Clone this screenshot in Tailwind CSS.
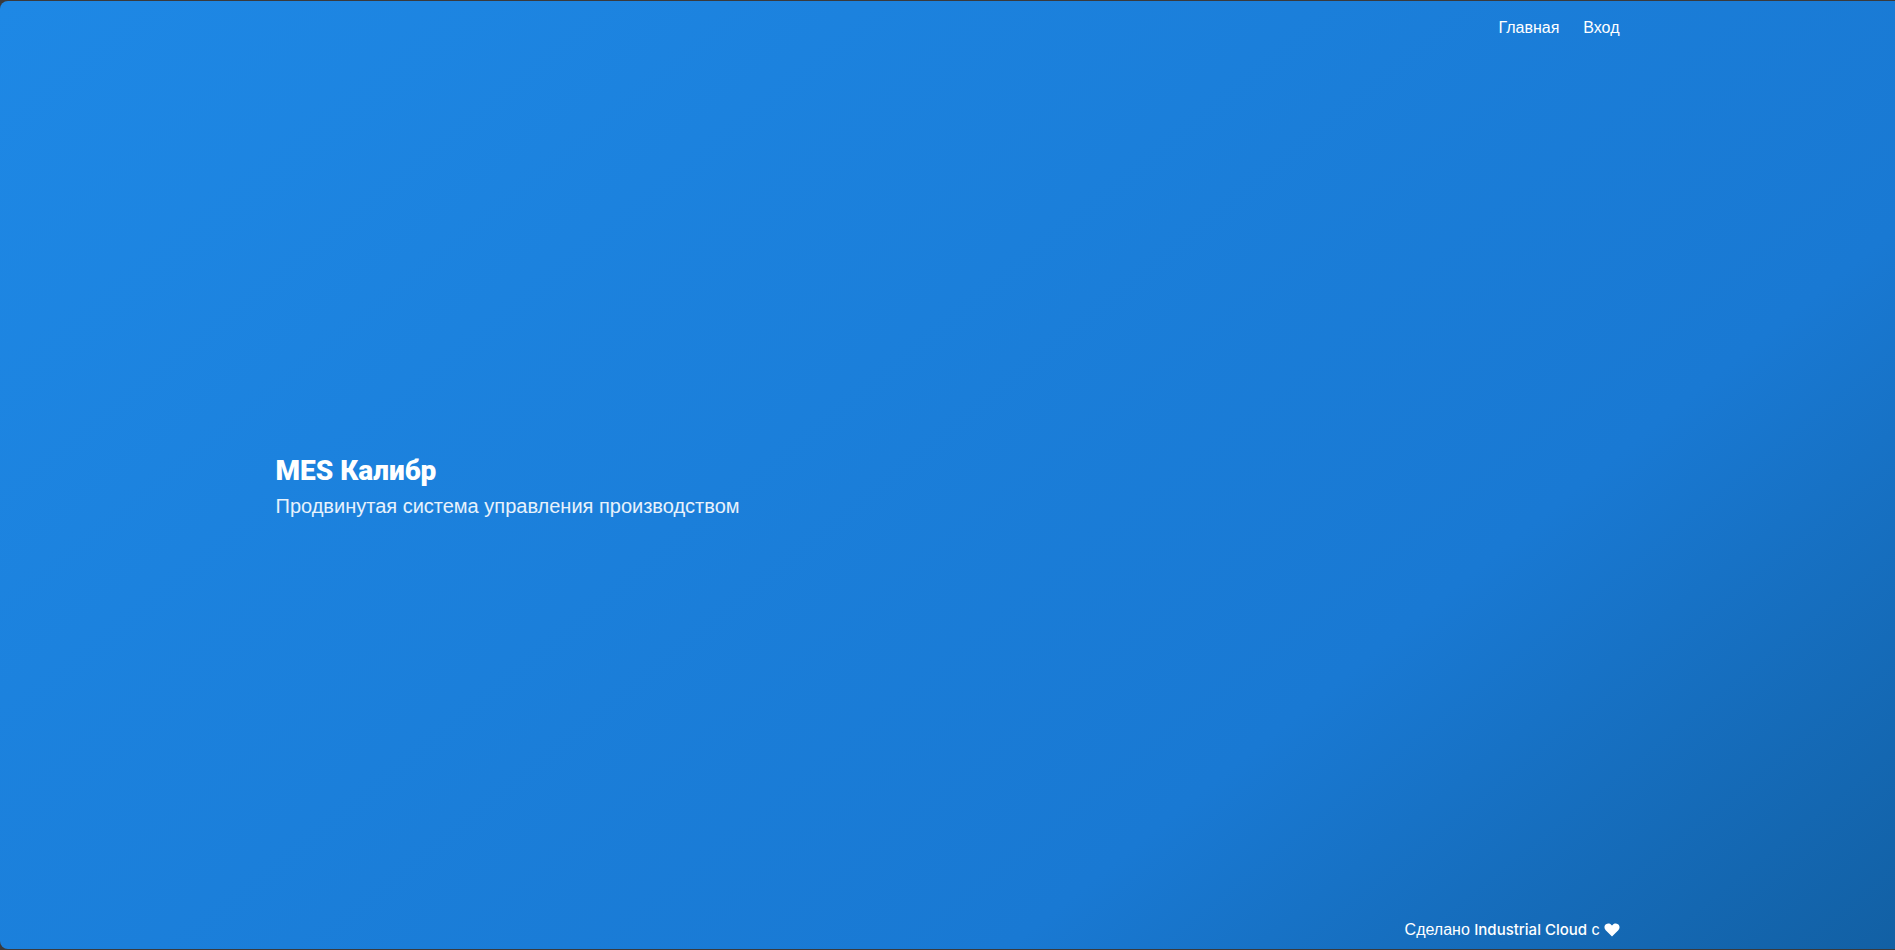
<!DOCTYPE html>
<html lang="ru">
<head>
  <meta charset="UTF-8" />
  <meta name="viewport" content="width=device-width, initial-scale=1.0"/>
  <title>MES Калибр</title>
  <script src="https://cdn.jsdelivr.net/npm/@tailwindcss/browser@4"></script>
</head>
<body class="bg-[#3a3a3c] font-['Liberation_Sans',Arial,sans-serif] text-base text-white">

  <div class="min-h-screen py-px flex flex-col">
    <div class="flex-1 flex flex-col rounded-l-lg bg-[linear-gradient(141deg,#1e88e5_0%,#1979d3_71%,#1260a4_100%)]">

      <!-- Navbar -->
      <header class="w-full max-w-[1344px] mx-auto pt-[15px]">
        <nav class="flex justify-end gap-6">
          <a href="#" class="hover:underline">Главная</a>
          <a href="#" class="hover:underline">Вход</a>
        </nav>
      </header>

      <!-- Hero Section -->
      <main class="flex-1 w-full max-w-[1344px] mx-auto pt-[14px] flex flex-col justify-center">
        <h1 class="font-[Impact,Roboto,sans-serif] font-black text-[28px] leading-10">MES Калибр</h1>
        <p class="text-xl leading-[30px] text-white/90">Продвинутая система управления производством</p>
      </main>

      <!-- Footer -->
      <footer class="w-full max-w-[1344px] mx-auto pb-[7px] flex justify-end items-center gap-1">
        <p>Сделано <span class="font-['Inter',sans-serif] text-[15px] font-medium">Industrial Cloud</span> с</p>
        <svg class="w-4 h-4" viewBox="0 0 16 16" fill="currentColor" role="img" aria-label="любовью">
          <path d="M8 14.5 1.7 8.2C-.2 6.2.2 3.5 2 2.2 3.8 1 6 1.4 7.4 2.9L8 3.6l.6-.7C10 1.4 12.2 1 14 2.2c1.8 1.3 2.2 4 .3 6z" />
        </svg>
      </footer>

    </div>
  </div>

</body>
</html>
